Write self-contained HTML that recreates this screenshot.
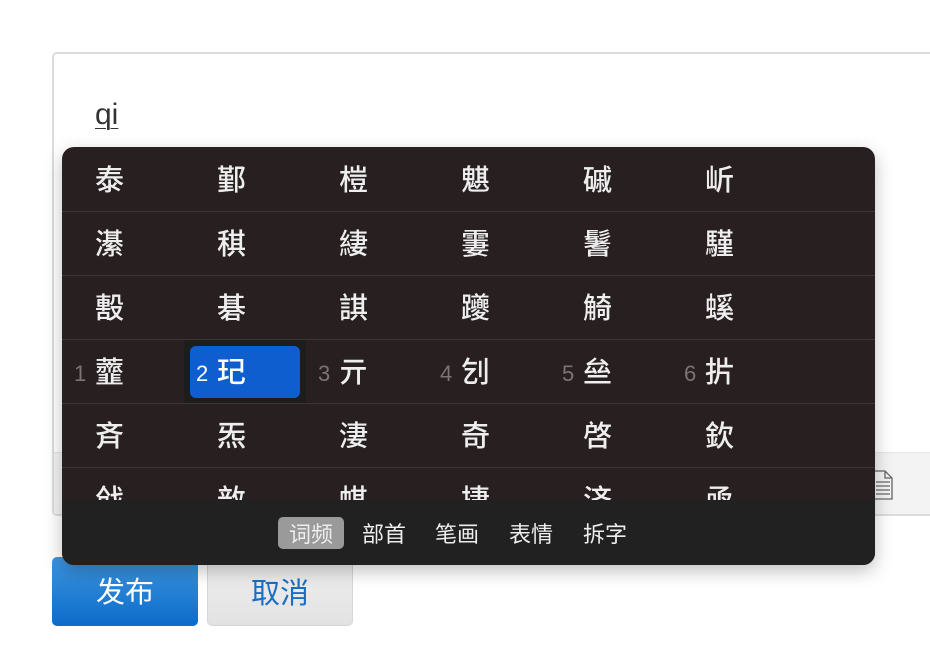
<!DOCTYPE html>
<html><head><meta charset="utf-8"><style>
*{margin:0;padding:0;box-sizing:border-box}
body{width:930px;height:658px;background:#fff;position:relative;overflow:hidden;font-family:"Liberation Sans","Noto Sans CJK SC",sans-serif}
.box{position:absolute;left:52px;top:52px;width:900px;height:464px;border:2px solid #dcdcdc;border-radius:5px;background:#fff}
.strip{position:absolute;left:54px;top:452px;width:900px;height:62px;background:#f3f3f3;border-top:1px solid #e6e6e6}
.qi{position:absolute;left:95px;top:98px;font-size:30px;color:#333;text-decoration:underline;text-decoration-thickness:1px;text-underline-offset:4px;font-family:"Liberation Sans",sans-serif}
.pop{position:absolute;left:62px;top:147px;width:813px;height:418px;border-radius:12px;background:#281f20;overflow:hidden;box-shadow:0 6px 18px rgba(0,0,0,.25)}
.row{position:absolute;left:0;width:813px;height:64px;border-bottom:1px solid #3e3536}
.c{position:absolute;top:13px;font-size:29px;color:#eee;line-height:34px;font-family:"Noto Sans CJK SC",sans-serif;font-weight:500}
.n{position:absolute;top:18px;font-size:22px;color:#7a7474;line-height:32px;font-family:"Liberation Sans",sans-serif}
.dk{position:absolute;left:122px;top:193px;width:122px;height:64px;background:#1e1d1d}
.hl{position:absolute;left:128px;top:199px;width:110px;height:52px;background:#0f5ecf;border-radius:6px}
.bar{position:absolute;left:0;top:353px;width:813px;height:65px;background:#212121}
.t{position:absolute;top:17px;font-size:22px;color:#eee;font-family:"Noto Sans CJK SC",sans-serif;line-height:32px}
.btn{position:absolute;top:557px;width:146px;height:69px;border-radius:5px;font-size:29px;text-align:center;line-height:66px;font-family:"Noto Sans CJK SC",sans-serif}
</style></head><body>
<div class="box"></div>
<div class="strip"></div>
<svg style="position:absolute;left:872px;top:470px" width="26" height="30" viewBox="0 0 26 30"><path d="M1 1H13L20 8V29H1Z M13 1V8H20" fill="none" stroke="#666" stroke-width="1.3"/><path d="M4 12H18M4 16H18M4 20H18M4 24H18" stroke="#666" stroke-width="1.3"/></svg>
<div class="qi">qi</div>
<div class="btn" style="left:52px;background:linear-gradient(#3d96e0,#0d6bc9);color:#fff">发布</div>
<div class="btn" style="left:207px;background:linear-gradient(#f0f0f0,#e2e2e2);border:1px solid #d6d6d6;color:#1a6fc4">取消</div>
<div class="pop">
<div class="dk"></div><div class="hl"></div>
<div class="row" style="top:1px"><span class="c" style="left:33px">泰</span><span class="c" style="left:155px">鄞</span><span class="c" style="left:277px">榿</span><span class="c" style="left:399px">魌</span><span class="c" style="left:521px">磩</span><span class="c" style="left:643px">岓</span></div>
<div class="row" style="top:65px"><span class="c" style="left:33px">濝</span><span class="c" style="left:155px">稘</span><span class="c" style="left:277px">緀</span><span class="c" style="left:399px">霋</span><span class="c" style="left:521px">鬐</span><span class="c" style="left:643px">騹</span></div>
<div class="row" style="top:129px"><span class="c" style="left:33px">毄</span><span class="c" style="left:155px">碁</span><span class="c" style="left:277px">諆</span><span class="c" style="left:399px">躨</span><span class="c" style="left:521px">觭</span><span class="c" style="left:643px">螇</span></div>
<div class="row" style="top:193px"><span class="n" style="left:12px">1</span><span class="c" style="left:33px">虀</span><span class="n" style="left:134px;color:#fff">2</span><span class="c" style="left:155px;color:#fff">玘</span><span class="n" style="left:256px">3</span><span class="c" style="left:277px">亓</span><span class="n" style="left:378px">4</span><span class="c" style="left:399px">刉</span><span class="n" style="left:500px">5</span><span class="c" style="left:521px">亝</span><span class="n" style="left:622px">6</span><span class="c" style="left:643px">扸</span></div>
<div class="row" style="top:257px"><span class="c" style="left:33px">斉</span><span class="c" style="left:155px">炁</span><span class="c" style="left:277px">淒</span><span class="c" style="left:399px">奇</span><span class="c" style="left:521px">啓</span><span class="c" style="left:643px">欽</span></div>
<div class="row" style="top:321px;border:none"><span class="c" style="left:33px">戗</span><span class="c" style="left:155px">敨</span><span class="c" style="left:277px">帺</span><span class="c" style="left:399px">捿</span><span class="c" style="left:521px">济</span><span class="c" style="left:643px">亟</span></div>
<div class="bar">
<div style="position:absolute;left:216px;top:17px;width:66px;height:32px;background:#9a9a9a;border-radius:5px"></div>
<span class="t" style="left:227px">词频</span><span class="t" style="left:300px">部首</span><span class="t" style="left:373px">笔画</span><span class="t" style="left:447px">表情</span><span class="t" style="left:521px">拆字</span>
</div>
</div>
</body></html>
